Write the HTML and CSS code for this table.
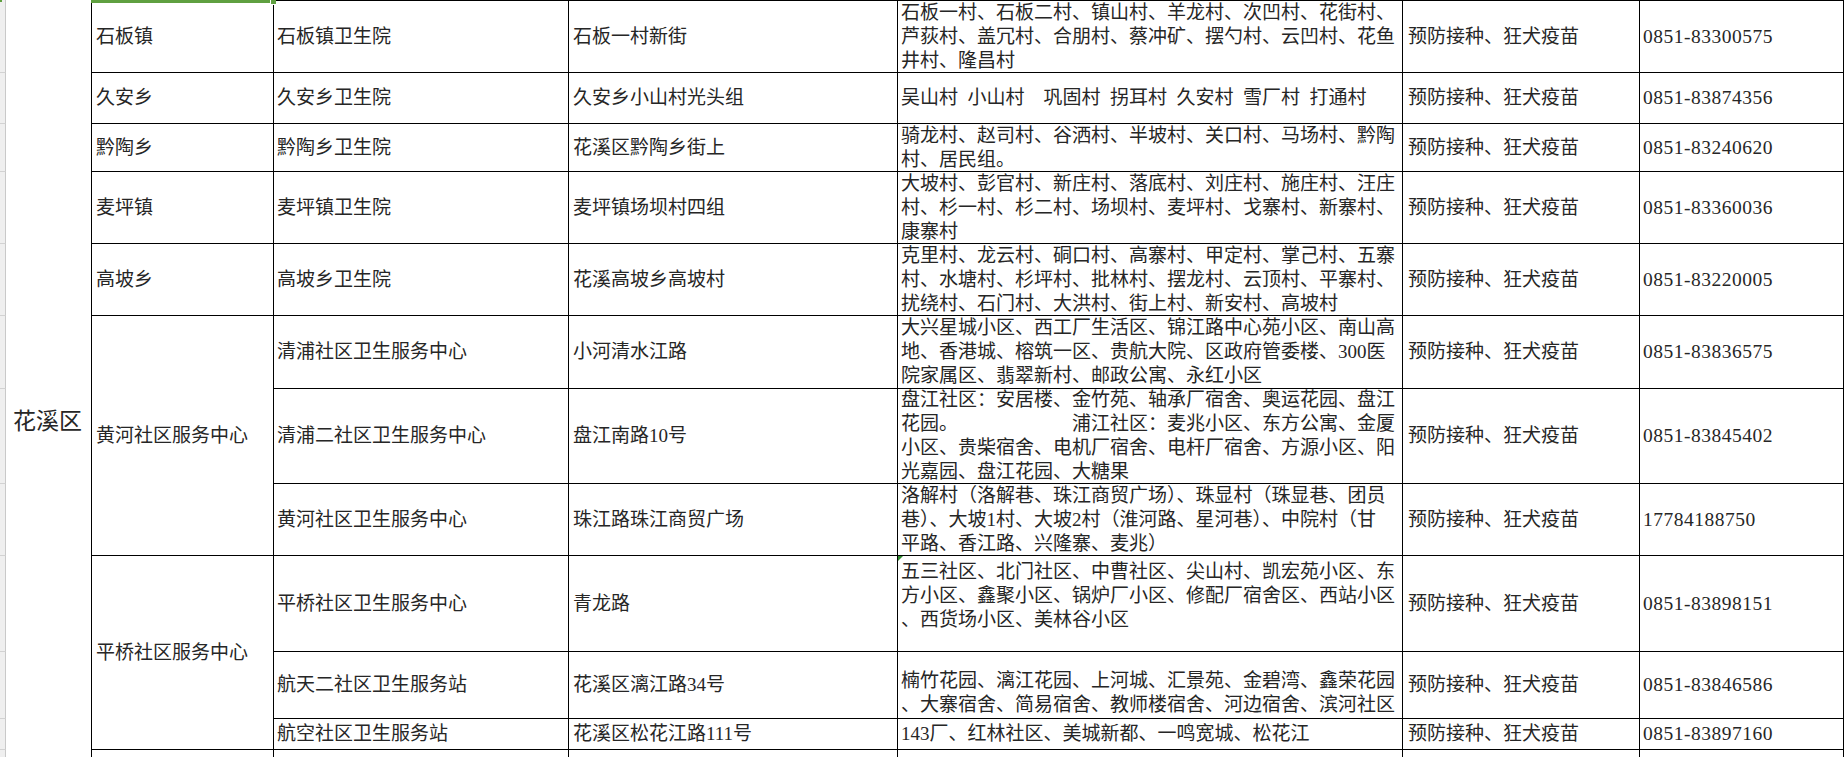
FILE: index.html
```html
<!DOCTYPE html>
<html lang="zh-CN">
<head>
<meta charset="utf-8">
<title>花溪区预防接种门诊</title>
<link rel="stylesheet" href="styles.css">
</head>
<body>
<div class="wrap">
  <div class="rowhead">
    <div class="rh"></div><div class="rh"></div><div class="rh"></div><div class="rh"></div>
    <div class="rh"></div><div class="rh"></div><div class="rh"></div><div class="rh"></div>
    <div class="rh"></div><div class="rh"></div><div class="rh"></div><div class="rh"></div>
  </div>
  <div class="sheet">
    <div class="c dist">花溪区</div>

    <div class="c b first">石板镇</div>
    <div class="c cc first">石板镇卫生院</div>
    <div class="c d first">石板一村新街</div>
    <div class="c e first"><div>石板一村、石板二村、镇山村、羊龙村、次凹村、花街村、<br>芦荻村、盖冗村、合朋村、蔡冲矿、摆勺村、云凹村、花鱼<br>井村、隆昌村</div></div>
    <div class="c f first">预防接种、狂犬疫苗</div>
    <div class="c g first">0851-83300575</div>

    <div class="c b">久安乡</div>
    <div class="c cc">久安乡卫生院</div>
    <div class="c d">久安乡小山村光头组</div>
    <div class="c e"><div>吴山村&ensp;小山村&ensp;&ensp;巩固村&ensp;拐耳村&ensp;久安村&ensp;雪厂村&ensp;打通村</div></div>
    <div class="c f">预防接种、狂犬疫苗</div>
    <div class="c g">0851-83874356</div>

    <div class="c b">黔陶乡</div>
    <div class="c cc">黔陶乡卫生院</div>
    <div class="c d">花溪区黔陶乡街上</div>
    <div class="c e"><div>骑龙村、赵司村、谷洒村、半坡村、关口村、马场村、黔陶<br>村、居民组。</div></div>
    <div class="c f">预防接种、狂犬疫苗</div>
    <div class="c g">0851-83240620</div>

    <div class="c b">麦坪镇</div>
    <div class="c cc">麦坪镇卫生院</div>
    <div class="c d">麦坪镇场坝村四组</div>
    <div class="c e"><div>大坡村、彭官村、新庄村、落底村、刘庄村、施庄村、汪庄<br>村、杉一村、杉二村、场坝村、麦坪村、戈寨村、新寨村、<br>康寨村</div></div>
    <div class="c f">预防接种、狂犬疫苗</div>
    <div class="c g">0851-83360036</div>

    <div class="c b">高坡乡</div>
    <div class="c cc">高坡乡卫生院</div>
    <div class="c d">花溪高坡乡高坡村</div>
    <div class="c e"><div>克里村、龙云村、硐口村、高寨村、甲定村、掌己村、五寨<br>村、水塘村、杉坪村、批林村、摆龙村、云顶村、平寨村、<br>扰绕村、石门村、大洪村、街上村、新安村、高坡村</div></div>
    <div class="c f">预防接种、狂犬疫苗</div>
    <div class="c g">0851-83220005</div>

    <div class="c b span3">黄河社区服务中心</div>
    <div class="c cc">清浦社区卫生服务中心</div>
    <div class="c d">小河清水江路</div>
    <div class="c e"><div>大兴星城小区、西工厂生活区、锦江路中心苑小区、南山高<br>地、香港城、榕筑一区、贵航大院、区政府管委楼、300医<br>院家属区、翡翠新村、邮政公寓、永红小区</div></div>
    <div class="c f">预防接种、狂犬疫苗</div>
    <div class="c g">0851-83836575</div>

    <div class="c cc">清浦二社区卫生服务中心</div>
    <div class="c d">盘江南路10号</div>
    <div class="c e"><div>盘江社区：安居楼、金竹苑、轴承厂宿舍、奥运花园、盘江<br>花园。&ensp;&ensp;&ensp;&ensp;&ensp;&ensp;&ensp;&ensp;&ensp;&ensp;&ensp;&ensp;浦江社区：麦兆小区、东方公寓、金厦<br>小区、贵柴宿舍、电机厂宿舍、电杆厂宿舍、方源小区、阳<br>光嘉园、盘江花园、大糖果</div></div>
    <div class="c f">预防接种、狂犬疫苗</div>
    <div class="c g">0851-83845402</div>

    <div class="c cc">黄河社区卫生服务中心</div>
    <div class="c d">珠江路珠江商贸广场</div>
    <div class="c e"><div>洛解村（洛解巷、珠江商贸广场）、珠显村（珠显巷、团员<br>巷）、大坡1村、大坡2村（淮河路、星河巷）、中院村（甘<br>平路、香江路、兴隆寨、麦兆）</div></div>
    <div class="c f">预防接种、狂犬疫苗</div>
    <div class="c g">17784188750</div>

    <div class="c b span3">平桥社区服务中心</div>
    <div class="c cc">平桥社区卫生服务中心</div>
    <div class="c d">青龙路</div>
    <div class="c e e-top flagged"><div>五三社区、北门社区、中曹社区、尖山村、凯宏苑小区、东<br>方小区、鑫聚小区、锅炉厂小区、修配厂宿舍区、西站小区<br>、西货场小区、美林谷小区</div></div>
    <div class="c f">预防接种、狂犬疫苗</div>
    <div class="c g">0851-83898151</div>

    <div class="c cc">航天二社区卫生服务站</div>
    <div class="c d">花溪区漓江路34号</div>
    <div class="c e e-low"><div>楠竹花园、漓江花园、上河城、汇景苑、金碧湾、鑫荣花园<br>、大寨宿舍、简易宿舍、教师楼宿舍、河边宿舍、滨河社区</div></div>
    <div class="c f">预防接种、狂犬疫苗</div>
    <div class="c g">0851-83846586</div>

    <div class="c cc">航空社区卫生服务站</div>
    <div class="c d">花溪区松花江路111号</div>
    <div class="c e"><div>143厂、红林社区、美城新都、一鸣宽城、松花江</div></div>
    <div class="c f">预防接种、狂犬疫苗</div>
    <div class="c g">0851-83897160</div>

    <div class="c b"></div>
    <div class="c cc"></div>
    <div class="c d"></div>
    <div class="c e"></div>
    <div class="c f"></div>
    <div class="c g"></div>

    <div class="sel"></div>
    <div class="sel-handle"></div>
  </div>
  <div class="corner"></div>
</div>
</body>
</html>
```
FILE: styles.css
```css
html, body {
  margin: 0;
  padding: 0;
  background: #ffffff;
  overflow: hidden;
}

body {
  font-family: "Liberation Serif", "Noto Sans CJK SC", serif;
  font-size: 19px;
  color: #262626;
}

.wrap {
  --rows: 73px 51px 48px 72px 72px 73px 95px 72px 96px 67px 31px 94px;
  position: relative;
  display: flex;
  align-items: flex-start;
  height: 100vh;
  overflow: hidden;
}

.rowhead {
  display: grid;
  grid-template-rows: var(--rows);
  width: 6px;
}

.rh {
  box-sizing: border-box;
  background: #efefef;
  border-right: 1px solid #c9c9c9;
  border-bottom: 1px solid #d2d2d2;
}

.corner {
  position: absolute;
  left: 0;
  top: 0;
  width: 2px;
  height: 2px;
  background: #5fa040;
}

.sheet {
  position: relative;
  display: grid;
  grid-template-columns: 86px 182px 295px 329px 505px 237px 204px;
  grid-template-rows: var(--rows);
}

.c {
  box-sizing: border-box;
  border-right: 1px solid #000;
  border-bottom: 1px solid #000;
  display: flex;
  align-items: center;
  padding: 0 3px;
  line-height: 24px;
  white-space: nowrap;
  overflow: hidden;
}

.first {
  border-top: 1px solid #000;
}

.dist {
  grid-row: 1 / span 12;
  border-bottom: none;
  font-size: 23px;
  padding-left: 7px;
}

.b {
  padding-left: 4px;
}

.d {
  padding-left: 4px;
}

.f {
  padding-left: 5px;
}

.g {
  font-size: 19.5px;
  letter-spacing: 0.5px;
}

.span3 {
  grid-row: span 3;
}

.e-top {
  align-items: flex-start;
  padding-top: 4px;
}

.e-low {
  align-items: flex-start;
  padding-top: 17px;
}

.flagged {
  position: relative;
}

.flagged::before {
  content: "";
  position: absolute;
  left: 0;
  top: 0;
  border-top: 5px solid #2e8b2e;
  border-right: 5px solid transparent;
}

.sel {
  position: absolute;
  left: 85px;
  top: 0;
  width: 182px;
  height: 3px;
  background: #5fa040;
}

.sel-handle {
  position: absolute;
  left: 264px;
  top: 0;
  width: 5px;
  height: 4px;
  background: #5fa040;
  border-left: 1px solid #fff;
  border-bottom: 1px solid #fff;
}
```
